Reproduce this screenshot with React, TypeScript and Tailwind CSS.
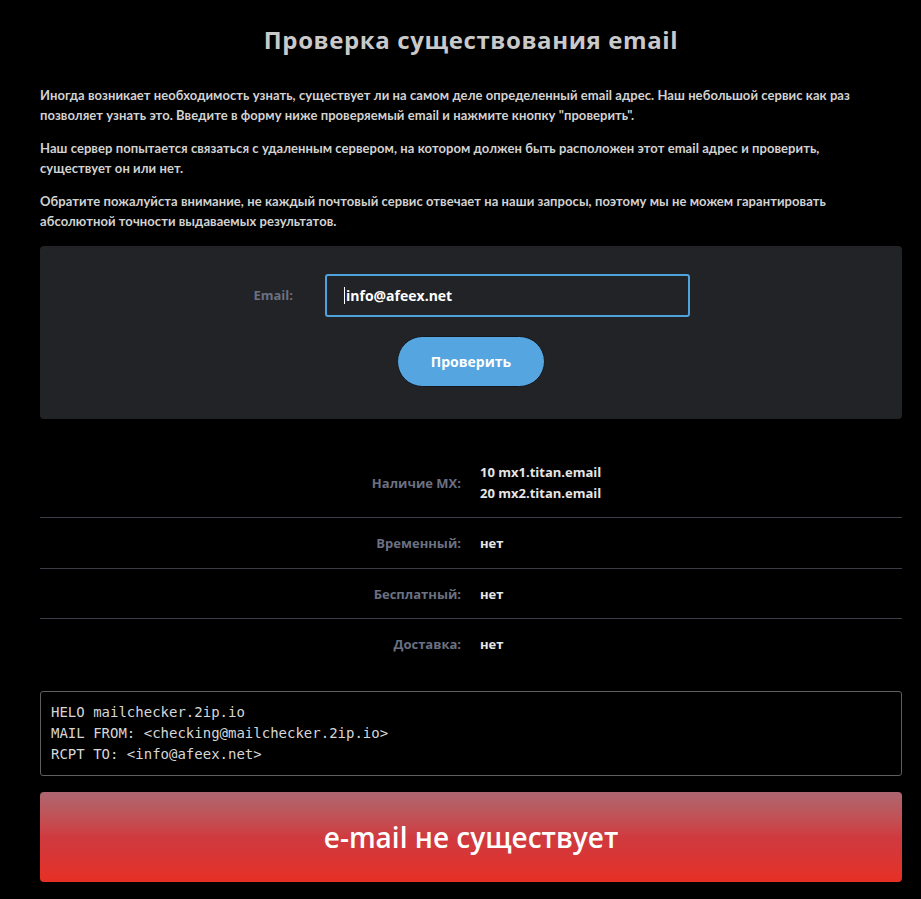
import React from "react";

const rows: { label: string; values: string[]; h: string }[] = [
  { label: "Наличие MX:", values: ["10 mx1.titan.email", "20 mx2.titan.email"], h: "h-[70px]" },
  { label: "Временный:", values: ["нет"], h: "h-[51px]" },
  { label: "Бесплатный:", values: ["нет"], h: "h-[50px]" },
  { label: "Доставка:", values: ["нет"], h: "h-[50px]" },
];

export default function App() {
  return (
    <div className="min-h-[899px] bg-black pl-[40px] pr-[19px] pt-[24px] pb-[18px] font-['Open_Sans',sans-serif] text-[#d4d4d4]">
      <h1 className="text-center text-[24px] font-bold leading-[32px] tracking-[0.6px] text-[#c9c9c9]">
        Проверка существования email
      </h1>

      <div className="mt-[29px] space-y-[13px] font-['Lato',sans-serif] text-[13px] font-bold leading-[20px] tracking-[0.07px] text-[#d2d2d2]">
        <p>
          Иногда возникает необходимость узнать, существует ли на самом деле определенный email адрес. Наш небольшой сервис как раз
          <br />
          позволяет узнать это. Введите в форму ниже проверяемый email и нажмите кнопку "проверить".
        </p>
        <p>
          Наш сервер попытается связаться с удаленным сервером, на котором должен быть расположен этот email адрес и проверить,
          <br />
          существует он или нет.
        </p>
        <p>
          Обратите пожалуйста внимание, не каждый почтовый сервис отвечает на наши запросы, поэтому мы не можем гарантировать
          <br />
          абсолютной точности выдаваемых результатов.
        </p>
      </div>

      <div className="mt-[15px] rounded-[4px] bg-[#222327] pt-[28px] pb-[32px]">
        <div className="flex items-center">
          <label className="w-[253px] text-right text-[13px] font-bold text-[#6b7082]">Email:</label>
          <div className="ml-[32px] flex h-[43px] w-[365px] items-center rounded-[3px] border-2 border-[#4fa3dd] px-[17px] text-[14px] font-bold text-white">
            <span className="mr-[1px] inline-block h-[17px] w-px bg-white" />
            info@afeex.net
          </div>
        </div>
        <div className="mt-[19px] flex justify-center">
          <button className="h-[51px] w-[148px] rounded-full border border-[#15171c] bg-[#55a5e0] text-[14px] font-bold text-white">
            Проверить
          </button>
        </div>
      </div>

      <div className="mt-[29px]">
        {rows.map((r, i) => (
          <div
            key={r.label}
            className={`flex items-center ${r.h} text-[13px] font-bold leading-[20px] ${i < rows.length - 1 ? "border-b border-[#3a3d47]" : ""}`}
          >
            <div className="w-[421px] text-right text-[#6b7082]">{r.label}</div>
            <div className="ml-[19px] text-[#e6e6e6]">
              {r.values.map((v) => (
                <div key={v} className={r.values.length > 1 ? "leading-[21px]" : "leading-[20px]"}>{v}</div>
              ))}
            </div>
          </div>
        ))}
      </div>

      <pre className="mt-[22px] rounded-[3px] border border-[#5f5f5f] px-[10px] py-[10px] font-['DejaVu_Sans_Mono',monospace] text-[14px] leading-[21px] text-[#d6d6d6]">
{`HELO mailchecker.2ip.io
MAIL FROM: <checking@mailchecker.2ip.io>
RCPT TO: <info@afeex.net>`}
      </pre>

      <div className="mt-[16px] flex h-[90px] items-center justify-center rounded-[4px] bg-gradient-to-b from-[#ad6670] via-[#cf3a3f] to-[#e62f24] text-[28px] font-semibold text-white">
        e-mail не существует
      </div>
    </div>
  );
}
